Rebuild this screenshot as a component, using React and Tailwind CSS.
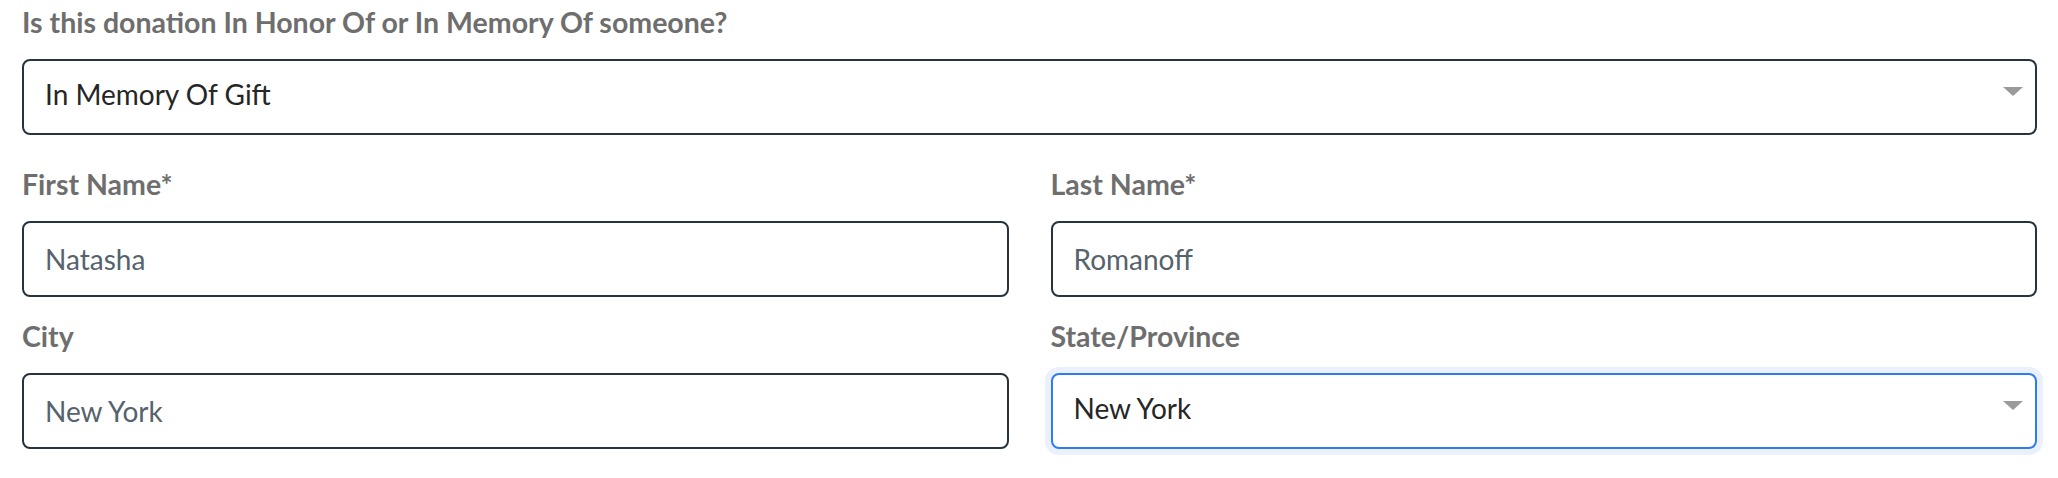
import React from 'react';

const labelCls = "block font-bold text-[28.5px] leading-[32px] text-[#6e6e6e]";
const fieldBase = "w-full h-[76px] rounded-[8px] border-2 bg-white px-[21px] text-[28px] outline-none appearance-none";

const Arrow = () => (
    <svg
        className="pointer-events-none absolute right-[14px] top-[28px]"
        width="20"
        height="9"
        viewBox="0 0 20 9"
    >
        <polygon points="0,0 20,0 10,9" fill="#9a9a9a" />
    </svg>
);

const TextField = ({ label, value }) => (
    <div>
        <label className={labelCls}>{label}</label>
        <input
            type="text"
            readOnly
            value={value}
            className={`${fieldBase} mt-[21px] border-[#27333d] text-[#56626c]`}
        />
    </div>
);

const App = () => {
    return (
        <div className="min-h-screen bg-white pt-[6px] pl-[22px] pr-[21px] font-['Lato','Liberation_Sans',sans-serif]">
            <label className={labelCls}>Is this donation In Honor Of or In Memory Of someone?</label>
            <div className="relative mt-[21px]">
                <select
                    defaultValue="memory"
                    className={`${fieldBase} pb-[6px] border-[#27333d] text-[#262626]`}
                >
                    <option value="none">No</option>
                    <option value="honor">In Honor Of Gift</option>
                    <option value="memory">In Memory Of Gift</option>
                </select>
                <Arrow />
            </div>

            <div className="mt-[33px] grid grid-cols-2 gap-x-[42px]">
                <TextField label="First Name*" value="Natasha" />
                <TextField label="Last Name*" value="Romanoff" />
            </div>

            <div className="mt-[23px] grid grid-cols-2 gap-x-[42px]">
                <TextField label="City" value="New York" />
                <div>
                    <label className={labelCls}>State/Province</label>
                    <div className="relative mt-[21px]">
                        <select
                            defaultValue="NY"
                            className={`${fieldBase} pb-[6px] border-[#2f7cf0] text-[#262626] shadow-[0_0_0_6px_#eaf1fd]`}
                        >
                            <option value="NJ">New Jersey</option>
                            <option value="NY">New York</option>
                            <option value="PA">Pennsylvania</option>
                        </select>
                        <Arrow />
                    </div>
                </div>
            </div>
        </div>
    );
};

export default App;
